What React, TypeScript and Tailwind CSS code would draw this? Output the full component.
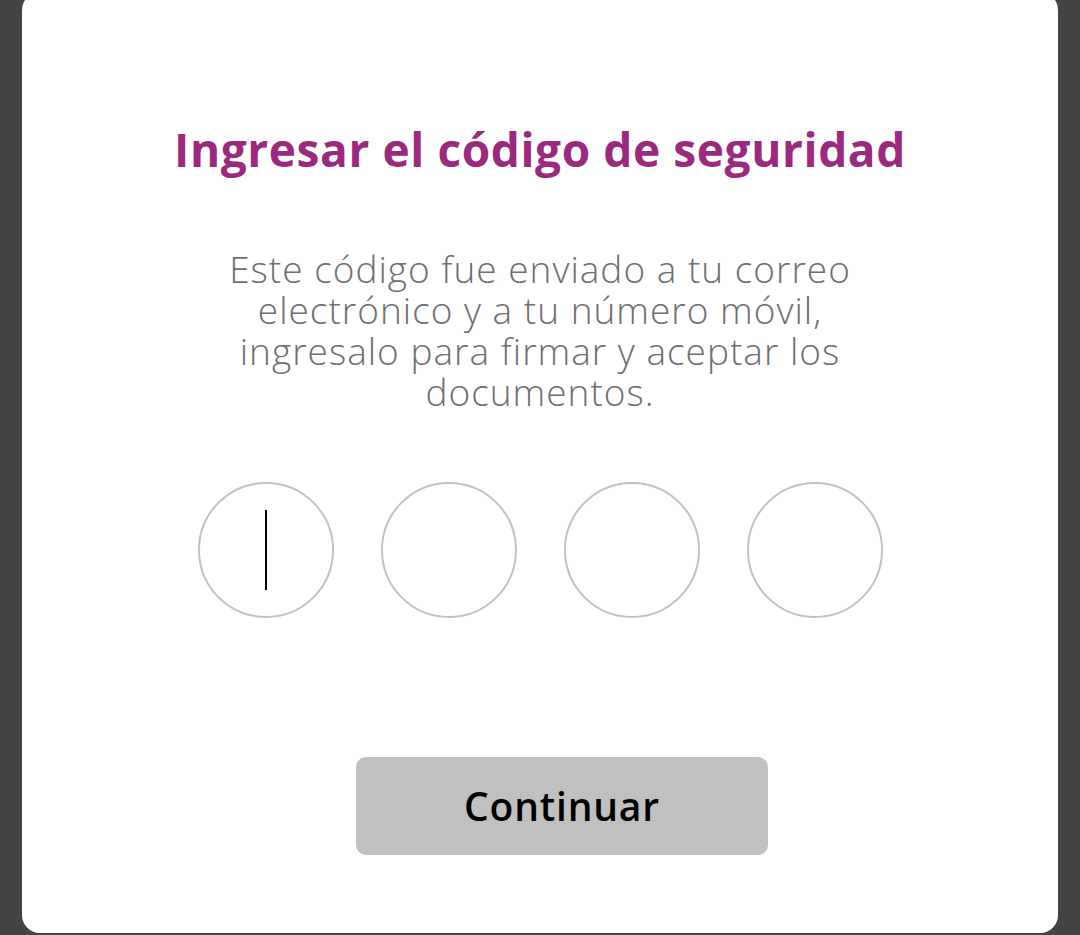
export default function App() {
  const cells = [0, 1, 2, 3];
  return (
    <div className="h-[935px] overflow-hidden bg-[#444444] px-[22px]">
      <div className="-mt-[8px] flex h-[941px] flex-col items-center rounded-[18px] bg-white pt-[129px] font-['Open_Sans',sans-serif]">
        <h1 className="text-[46px] leading-[56px] font-bold tracking-[0.6px] text-[#9b2a7f]">
          Ingresar el código de seguridad
        </h1>

        <p className="mt-[71px] text-center text-[37px] leading-[41px] font-light tracking-[1px] text-[#6e6e6e]">
          Este código fue enviado a tu correo
          <br />
          electrónico y a tu número móvil,
          <br />
          ingresalo para firmar y aceptar los
          <br />
          documentos.
        </p>

        <div className="mt-[70px] flex gap-[47px]">
          {cells.map((i) => (
            <div
              key={i}
              className="flex h-[136px] w-[136px] items-center justify-center rounded-full border-2 border-[#c2c2c2]"
            >
              {i === 0 && <div className="h-[80px] w-[2px] bg-black" />}
            </div>
          ))}
        </div>

        <button className="mt-[139px] ml-[44px] h-[98px] w-[412px] rounded-[10px] bg-[#c0c0c0] text-[39px] font-semibold tracking-[0.8px] text-black">
          Continuar
        </button>
      </div>
    </div>
  );
}
